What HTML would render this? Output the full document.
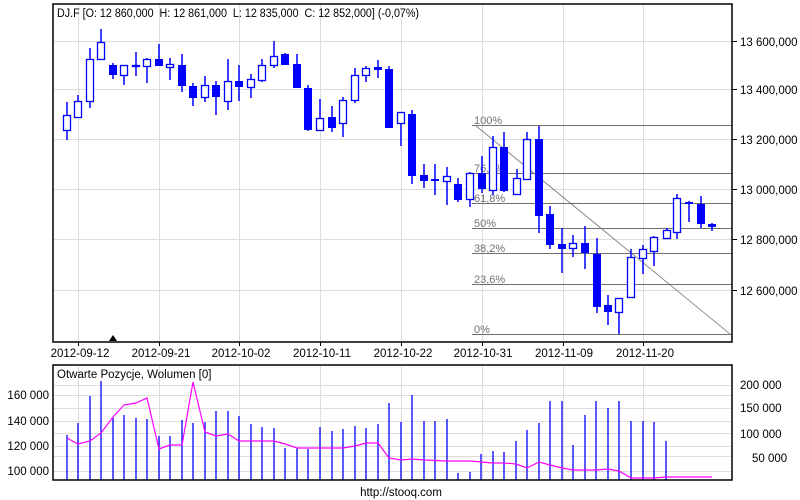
<!DOCTYPE html>
<html><head><meta charset="utf-8"><style>
html,body{margin:0;padding:0;background:#fff;}
svg{display:block;font-family:"Liberation Sans",Arial,sans-serif;}
</style></head><body>
<svg width="800" height="500" viewBox="0 0 800 500" xmlns="http://www.w3.org/2000/svg">
<rect width="800" height="500" fill="#fff"/>
<g stroke="#dcdcdc" stroke-width="1">
<line x1="78.5" y1="4" x2="78.5" y2="342"/><line x1="159.5" y1="4" x2="159.5" y2="342"/>
<line x1="239.5" y1="4" x2="239.5" y2="342"/><line x1="320.5" y1="4" x2="320.5" y2="342"/>
<line x1="401.5" y1="4" x2="401.5" y2="342"/><line x1="482.5" y1="4" x2="482.5" y2="342"/>
<line x1="563.5" y1="4" x2="563.5" y2="342"/><line x1="643.5" y1="4" x2="643.5" y2="342"/>
<line x1="53" y1="41.5" x2="732" y2="41.5"/><line x1="53" y1="89.5" x2="732" y2="89.5"/>
<line x1="53" y1="139.5" x2="732" y2="139.5"/><line x1="53" y1="189.5" x2="732" y2="189.5"/>
<line x1="53" y1="239.5" x2="732" y2="239.5"/><line x1="53" y1="290.5" x2="732" y2="290.5"/>
</g>
<g stroke="#707070" stroke-width="1">
<line x1="472" y1="125.5" x2="732" y2="125.5"/><line x1="472" y1="173.5" x2="732" y2="173.5"/>
<line x1="472" y1="203.5" x2="732" y2="203.5"/><line x1="472" y1="228.5" x2="732" y2="228.5"/>
<line x1="472" y1="253.5" x2="732" y2="253.5"/><line x1="472" y1="284.5" x2="732" y2="284.5"/>
<line x1="472" y1="334.5" x2="732" y2="334.5"/>
<line x1="475" y1="125" x2="730" y2="334" stroke-width="0.8"/>
</g>
<g font-size="11" fill="#707070">
<text x="474" y="124">100%</text><text x="474" y="172">76,4%</text><text x="474" y="202">61,8%</text>
<text x="474" y="227">50%</text><text x="474" y="252">38,2%</text><text x="474" y="283">23,6%</text><text x="474" y="333">0%</text>
</g>
<g stroke="#0000ff" stroke-width="1.5" fill="none">
<path d="M67 102V140M78 95V118M90 48V108M101 29V59M113 63V79M124 65V85M136 52V76M147 58V83M159 44V66M170 58V80M182 54V92M193 83V106M205 76V102M216 81V115M228 59V110M239 65V101M251 74V98M262 59V82M274 41V68M285 53V65M297 54V88M308 85V131M320 99V131M332 106V132M343 97V137M355 68V103M366 66V82M378 60V78M389 66V128M401 112V146M412 110V184M424 164V188M435 164V195M447 167V205M458 178V202M470 172V207M482 156V193M493 136V195M504 132V192M517 169V195M527 132V179M539 126V233M550 206V249M562 228V273M573 235V257M585 226V269M597 238V313M608 295V325M619 298V334M631 249V297M643 245V274M654 236V266M667 228V238M677 194V239M689 201V222M701 196V228M712 223V231"/>
</g>
<g fill="#0000ff">
<rect x="109" y="65" width="8" height="10"/><rect x="155" y="59" width="8" height="7"/>
<rect x="178" y="65" width="8" height="21"/><rect x="189" y="86" width="8" height="12"/>
<rect x="212" y="85" width="8" height="12"/><rect x="235" y="81" width="8" height="6"/>
<rect x="281" y="54" width="8" height="11"/><rect x="293" y="64" width="8" height="24"/>
<rect x="304" y="88" width="8" height="42"/><rect x="328" y="117" width="8" height="11"/>
<rect x="374" y="67" width="8" height="3"/><rect x="385" y="69" width="8" height="59"/>
<rect x="408" y="114" width="8" height="62"/><rect x="420" y="175" width="8" height="6"/>
<rect x="431" y="179" width="8" height="2"/><rect x="454" y="184" width="8" height="16"/>
<rect x="478" y="173" width="8" height="16"/><rect x="500" y="147" width="8" height="44"/>
<rect x="535" y="139" width="8" height="77"/><rect x="546" y="214" width="8" height="31"/>
<rect x="558" y="244" width="8" height="5"/><rect x="581" y="243" width="8" height="10"/>
<rect x="593" y="254" width="8" height="53"/><rect x="604" y="305" width="8" height="7"/>
<rect x="685" y="202" width="8" height="2"/><rect x="697" y="204" width="8" height="20"/>
<rect x="708" y="224" width="8" height="3"/>
</g>
<g fill="#fff" stroke="#0000ff" stroke-width="1.3">
<rect x="63.5" y="115.5" width="7" height="15"/><rect x="74.5" y="101.5" width="7" height="16"/>
<rect x="86.5" y="59.5" width="7" height="42"/><rect x="97.5" y="42.5" width="7" height="17"/>
<rect x="120.5" y="65.5" width="7" height="10"/><rect x="132.5" y="65.5" width="7" height="1"/>
<rect x="143.5" y="59.5" width="7" height="7"/><rect x="166.5" y="64.5" width="7" height="3"/>
<rect x="201.5" y="85.5" width="7" height="12"/><rect x="224.5" y="81.5" width="7" height="20"/>
<rect x="247.5" y="79.5" width="7" height="8"/><rect x="258.5" y="65.5" width="7" height="15"/>
<rect x="270.5" y="56.5" width="7" height="9"/><rect x="316.5" y="118.5" width="7" height="12"/>
<rect x="339.5" y="100.5" width="7" height="23"/><rect x="351.5" y="75.5" width="7" height="25"/>
<rect x="362.5" y="68.5" width="7" height="7"/><rect x="397.5" y="112.5" width="7" height="11"/>
<rect x="443.5" y="176.5" width="7" height="5"/><rect x="466.5" y="173.5" width="7" height="26"/>
<rect x="489.5" y="147.5" width="7" height="43"/><rect x="513.5" y="178.5" width="7" height="16"/>
<rect x="523.5" y="139.5" width="7" height="40"/><rect x="569.5" y="243.5" width="7" height="5"/>
<rect x="615.5" y="298.5" width="7" height="14"/><rect x="627.5" y="257.5" width="7" height="40"/>
<rect x="639.5" y="249.5" width="7" height="9"/><rect x="650.5" y="237.5" width="7" height="14"/>
<rect x="663.5" y="230.5" width="7" height="8"/><rect x="673.5" y="198.5" width="7" height="34"/>
</g>
<rect x="53" y="4" width="679" height="338" fill="none" stroke="#000" stroke-width="1.5"/>
<g stroke="#000"><line x1="732" y1="41.5" x2="737" y2="41.5"/><line x1="732" y1="89.5" x2="737" y2="89.5"/>
<line x1="732" y1="139.5" x2="737" y2="139.5"/><line x1="732" y1="189.5" x2="737" y2="189.5"/>
<line x1="732" y1="239.5" x2="737" y2="239.5"/><line x1="732" y1="290.5" x2="737" y2="290.5"/>
<line x1="78.5" y1="342" x2="78.5" y2="346"/><line x1="159.5" y1="342" x2="159.5" y2="346"/><line x1="239.5" y1="342" x2="239.5" y2="346"/><line x1="320.5" y1="342" x2="320.5" y2="346"/><line x1="401.5" y1="342" x2="401.5" y2="346"/><line x1="482.5" y1="342" x2="482.5" y2="346"/><line x1="563.5" y1="342" x2="563.5" y2="346"/><line x1="643.5" y1="342" x2="643.5" y2="346"/></g>
<polygon points="109,341 113,335 117,341" fill="#000"/>
<text x="57" y="17" font-size="11.5" textLength="362" lengthAdjust="spacingAndGlyphs">DJ.F [O: 12 860,000&#160;&#160;H: 12 861,000&#160;&#160;L: 12 835,000&#160;&#160;C: 12 852,000] (-0,07%)</text>
<g font-size="11.5">
<text x="740" y="46">13 600,000</text><text x="740" y="94">13 400,000</text><text x="740" y="144">13 200,000</text>
<text x="740" y="194">13 000,000</text><text x="740" y="244">12 800,000</text><text x="740" y="295">12 600,000</text>
</g>
<g font-size="11.5" text-anchor="middle">
<text x="80" y="357">2012-09-12</text><text x="161" y="357">2012-09-21</text><text x="241" y="357">2012-10-02</text>
<text x="322" y="357">2012-10-11</text><text x="403" y="357">2012-10-22</text><text x="483" y="357">2012-10-31</text>
<text x="564" y="357">2012-11-09</text><text x="645" y="357">2012-11-20</text>
</g>
<g stroke="#dcdcdc">
<line x1="78.5" y1="365" x2="78.5" y2="480"/><line x1="159.5" y1="365" x2="159.5" y2="480"/><line x1="239.5" y1="365" x2="239.5" y2="480"/><line x1="320.5" y1="365" x2="320.5" y2="480"/><line x1="401.5" y1="365" x2="401.5" y2="480"/><line x1="482.5" y1="365" x2="482.5" y2="480"/><line x1="563.5" y1="365" x2="563.5" y2="480"/><line x1="643.5" y1="365" x2="643.5" y2="480"/>
<line x1="53" y1="385.5" x2="732" y2="385.5"/><line x1="53" y1="395.5" x2="732" y2="395.5"/><line x1="53" y1="408.5" x2="732" y2="408.5"/><line x1="53" y1="421.5" x2="732" y2="421.5"/><line x1="53" y1="433.5" x2="732" y2="433.5"/><line x1="53" y1="446.5" x2="732" y2="446.5"/><line x1="53" y1="456.5" x2="732" y2="456.5"/><line x1="53" y1="471.5" x2="732" y2="471.5"/>
</g>
<path stroke="#0000ff" stroke-width="1.3" fill="none" d="M67 480V435M78 480V423M90 480V396M101 480V381M113 480V418M124 480V415M136 480V418M147 480V419M159 480V436M170 480V436M182 480V420M193 480V423M205 480V422M216 480V411M228 480V411M239 480V416M251 480V424M262 480V427M274 480V428M285 480V448M297 480V448M308 480V449M320 480V427M332 480V431M343 480V429M355 480V426M366 480V428M378 480V424M389 480V403M401 480V422M412 480V395M424 480V421M435 480V421M447 480V419M458 480V473M470 480V472M481 480V454M493 480V451M504 480V452M516 480V441M527 480V430M539 480V423M550 480V401M562 480V401M573 480V445M585 480V415M596 480V401M608 480V408M619 480V401M631 480V421M643 480V421M654 480V422M666 480V441"/>
<polyline fill="none" stroke="#ff00ff" stroke-width="1.2" points="67,438 78,444 90,441 101,433 113,417 124,405 136,403 147,398 159,449 170,445 182,445 193,382 205,432 216,436 228,434 239,441 251,441 262,441 274,441 285,444 297,448 308,448 320,448 332,448 343,448 355,446 366,443 378,443 389,458 401,460 412,459 424,460 447,461 470,461 481,462 493,463 504,463 516,464 527,468 539,462 550,465 562,468 573,470 596,470 608,469 619,471 631,478 643,478 654,478 666,477 712,477"/>
<rect x="53" y="365" width="679" height="115" fill="none" stroke="#000" stroke-width="1.5"/>
<text x="57" y="378" font-size="11.5">Otwarte Pozycje, Wolumen [0]</text>
<g font-size="11.5" text-anchor="end">
<text x="49" y="399">160 000</text><text x="49" y="425">140 000</text><text x="49" y="450">120 000</text><text x="49" y="475">100 000</text>
</g>
<g font-size="11.5">
<text x="740" y="389">200 000</text><text x="740" y="412">150 000</text><text x="740" y="438">100 000</text><text x="752" y="462">50 000</text>
</g>
<text x="401" y="496" font-size="11.5" text-anchor="middle">http://stooq.com</text>
</svg>
</body></html>
